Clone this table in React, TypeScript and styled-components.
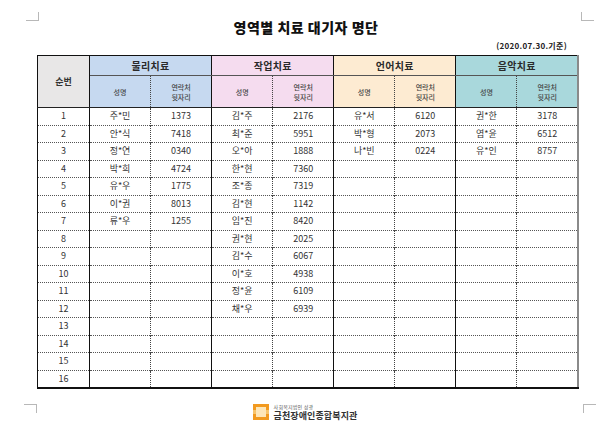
import styled, { createGlobalStyle } from 'styled-components'

const GlobalStyle = createGlobalStyle`
  html, body {
    margin: 0;
    padding: 0;
    background: #ffffff;
  }
  body {
    font-family: "Noto Sans CJK KR", "Noto Sans", sans-serif;
    color: #333333;
  }
`

type Group = {
  title: string
  color: string
  entries: [string, string][]
}

const groups: Group[] = [
  {
    title: '물리치료',
    color: '#c6d9f0',
    entries: [
      ['주*민', '1373'],
      ['안*식', '7418'],
      ['정*연', '0340'],
      ['박*희', '4724'],
      ['유*우', '1775'],
      ['이*권', '8013'],
      ['류*우', '1255'],
    ],
  },
  {
    title: '작업치료',
    color: '#f5dcef',
    entries: [
      ['김*주', '2176'],
      ['최*준', '5951'],
      ['오*아', '1888'],
      ['한*현', '7360'],
      ['조*종', '7319'],
      ['김*현', '1142'],
      ['임*진', '8420'],
      ['권*현', '2025'],
      ['김*수', '6067'],
      ['이*호', '4938'],
      ['정*윤', '6109'],
      ['채*우', '6939'],
    ],
  },
  {
    title: '언어치료',
    color: '#fdebd2',
    entries: [
      ['유*서', '6120'],
      ['박*형', '2073'],
      ['나*빈', '0224'],
    ],
  },
  {
    title: '음악치료',
    color: '#a9d8dc',
    entries: [
      ['권*한', '3178'],
      ['염*윤', '6512'],
      ['유*인', '8757'],
    ],
  },
]

const ROWS = 16

const Page = styled.div`
  position: relative;
  width: 600px;
  height: 432px;
  overflow: hidden;
  display: flex;
  flex-direction: column;
`

type MarkProps = { $x: number; $y: number; $flipX?: boolean; $flipY?: boolean }

const CornerMark = styled.div<MarkProps>`
  position: absolute;
  left: ${({ $x }) => $x}px;
  top: ${({ $y }) => $y}px;
  width: 12px;
  height: 8px;
  border-color: #b8b8b8;
  border-style: solid;
  border-width: 0;
  ${({ $flipX }) => ($flipX ? 'border-left-width: 1px;' : 'border-right-width: 1px;')}
  ${({ $flipY }) => ($flipY ? 'border-top-width: 1px;' : 'border-bottom-width: 1px;')}
`

const Title = styled.h1`
  margin: 18px 0 0;
  font-size: 14px;
  line-height: 18px;
  font-weight: 900;
  color: #111111;
  text-align: center;
  letter-spacing: 0.5px;
  padding-left: 12px;
`

const DateLine = styled.div`
  margin-top: 5px;
  padding-right: 33px;
  text-align: right;
  font-size: 8px;
  line-height: 10px;
  font-weight: 700;
  color: #222222;
  letter-spacing: 0.3px;
`

const Table = styled.table`
  margin: 4px 0 0 37px;
  width: 542px;
  border-collapse: collapse;
  table-layout: fixed;
  border-top: 1px solid #111;
  border-left: 1px solid #111;
  border-right: 2px solid #8a8a8a;
  border-bottom: 2px solid #111;
`

const NumHead = styled.th`
  width: 51px;
  background: #e8e7e7;
  border-right: 1px solid #111;
  border-bottom: 1px solid #222;
  font-size: 9px;
  font-weight: 700;
  color: #333;
  padding: 0;
`

const GroupHead = styled.th<{ $bg: string }>`
  height: 19px;
  background: ${({ $bg }) => $bg};
  border-right: 1px solid #111;
  border-bottom: 1px solid #555;
  font-size: 10px;
  font-weight: 700;
  color: #2a2a2a;
  padding: 0;
  letter-spacing: 0.3px;
`

const SubHead = styled.th<{ $bg: string; $split?: boolean }>`
  height: 31px;
  background: ${({ $bg }) => $bg};
  border-bottom: 1px solid #222;
  border-right: ${({ $split }) => ($split ? '1px dotted #444' : '1px solid #111')};
  font-size: 7px;
  line-height: 10px;
  font-weight: 500;
  color: #444;
  padding: 0;
`

const Row = styled.tr`
  height: 17.5px;
  & + & td {
    border-top: 1px dotted #555;
  }
`

const NumCell = styled.td`
  border-right: 1px solid #111;
  text-align: center;
  font-size: 9px;
  color: #333;
  padding: 0;
  line-height: 16px;
`

const Cell = styled.td<{ $split?: boolean }>`
  border-right: ${({ $split }) => ($split ? '1px dotted #444' : '1px solid #111')};
  text-align: center;
  font-size: 9px;
  color: #333;
  padding: 0;
  line-height: 16px;
`

const Footer = styled.div`
  margin-top: 15px;
  display: flex;
  align-items: center;
  justify-content: center;
  gap: 5px;
  padding-left: 10px;
`

const LogoText = styled.div`
  display: flex;
  flex-direction: column;
  line-height: 1;
`

const LogoSmall = styled.span`
  font-size: 5px;
  color: #555;
  margin-bottom: 2px;
  letter-spacing: 0.2px;
`

const LogoName = styled.span`
  font-size: 9px;
  font-weight: 700;
  color: #333;
  letter-spacing: 0.1px;
`

function LogoMark() {
  return (
    <svg width="16" height="16" viewBox="0 0 16 16">
      <rect x="0" y="0" width="16" height="16" fill="#f29a1f" />
      <rect x="3" y="3" width="10" height="10" fill="#fde6b8" />
      <rect x="0" y="6" width="3" height="4" fill="#f8c46a" />
      <rect x="13" y="6" width="3" height="4" fill="#f8c46a" />
    </svg>
  )
}

export default function App() {
  return (
    <Page>
      <GlobalStyle />
      <CornerMark $x={26} $y={12} />
      <CornerMark $x={581} $y={12} $flipX />
      <CornerMark $x={24} $y={404} $flipY />
      <CornerMark $x={583} $y={404} $flipX $flipY />

      <Title>영역별 치료 대기자 명단</Title>
      <DateLine>(2020.07.30.기준)</DateLine>

      <Table>
        <thead>
          <tr>
            <NumHead rowSpan={2}>순번</NumHead>
            {groups.map((g) => (
              <GroupHead key={g.title} colSpan={2} $bg={g.color}>
                {g.title}
              </GroupHead>
            ))}
          </tr>
          <tr>
            {groups.map((g) => [
              <SubHead key={g.title + '-name'} $bg={g.color} $split>
                성명
              </SubHead>,
              <SubHead key={g.title + '-tel'} $bg={g.color}>
                연락처
                <br />
                뒷자리
              </SubHead>,
            ])}
          </tr>
        </thead>
        <tbody>
          {Array.from({ length: ROWS }, (_, i) => (
            <Row key={i}>
              <NumCell>{i + 1}</NumCell>
              {groups.map((g) => {
                const entry = g.entries[i]
                return [
                  <Cell key={g.title + '-n'} $split>
                    {entry ? entry[0] : ''}
                  </Cell>,
                  <Cell key={g.title + '-t'}>{entry ? entry[1] : ''}</Cell>,
                ]
              })}
            </Row>
          ))}
        </tbody>
      </Table>

      <Footer>
        <LogoMark />
        <LogoText>
          <LogoSmall>사회복지법인 성광</LogoSmall>
          <LogoName>금천장애인종합복지관</LogoName>
        </LogoText>
      </Footer>
    </Page>
  )
}
